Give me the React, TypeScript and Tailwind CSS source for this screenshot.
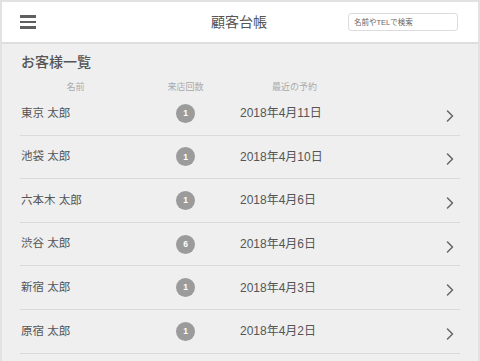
const customers = [
  { name: '東京 太郎', visits: 1, date: '2018年4月11日' },
  { name: '池袋 太郎', visits: 1, date: '2018年4月10日' },
  { name: '六本木 太郎', visits: 1, date: '2018年4月6日' },
  { name: '渋谷 太郎', visits: 6, date: '2018年4月6日' },
  { name: '新宿 太郎', visits: 1, date: '2018年4月3日' },
  { name: '原宿 太郎', visits: 1, date: '2018年4月2日' },
];

const font = { fontFamily: '"Liberation Sans", "Noto Sans CJK JP", sans-serif' };

function Chevron() {
  return (
    <svg width="8" height="12" viewBox="0 0 8 12" fill="none">
      <polyline points="1.5,1 6.5,6 1.5,11" stroke="#666" strokeWidth="1.5" strokeLinecap="round" strokeLinejoin="round" />
    </svg>
  );
}

export default function App() {
  return (
    <div className="h-[361px] w-[480px] overflow-hidden bg-[#e2e2e2] px-[2px] pt-[2px]" style={font}>
      <div className="flex h-full flex-col bg-[#efefef]">
        {/* Header */}
        <header className="grid h-[42px] shrink-0 grid-cols-[1fr_auto_1fr] items-center border-b-2 border-[#dedede] bg-white pl-[18px] pr-[20px]">
          <div className="flex w-[16px] flex-col gap-[3px]">
            <span className="block h-[2.5px] bg-[#5f5f5f]" />
            <span className="block h-[2.5px] bg-[#5f5f5f]" />
            <span className="block h-[2.5px] bg-[#5f5f5f]" />
          </div>
          <h1 className="text-center text-[14px] leading-none text-[#555]">顧客台帳</h1>
          <div className="flex justify-end">
            <input
              className="h-[18px] w-[110px] rounded-[3px] border border-[#dcdcdc] bg-white px-[5px] text-[7.5px] text-[#555] placeholder:text-[#666] outline-none"
              placeholder="名前やTELで検索"
            />
          </div>
        </header>

        {/* Content */}
        <main className="flex-1 px-[18px]">
          <h2 className="pl-[1px] pt-[8px] text-[14px] font-medium leading-[20px] text-[#555]">お客様一覧</h2>
          <div className="grid grid-cols-[111px_109px_1fr] pt-[10px] text-[9px] leading-[10px] text-[#aaa]">
            <div className="text-center">名前</div>
            <div className="text-center">来店回数</div>
            <div className="pl-[32px]">最近の予約</div>
          </div>
          <ul>
            {customers.map((c) => (
              <li
                key={c.name}
                className="grid h-[43.6px] grid-cols-[111px_109px_1fr_20px] items-center border-b border-[#dadada] text-[#555]"
              >
                <div className="pl-[1px] text-[11.5px]">{c.name}</div>
                <div className="flex justify-center">
                  <span className="flex h-[19px] w-[19px] items-center justify-center rounded-full bg-[#9b9b9b] text-[8.5px] font-bold text-white">
                    {c.visits}
                  </span>
                </div>
                <div className="text-[12px]">{c.date}</div>
                <div className="flex justify-center pt-[5px]">
                  <Chevron />
                </div>
              </li>
            ))}
          </ul>
        </main>
      </div>
    </div>
  );
}
